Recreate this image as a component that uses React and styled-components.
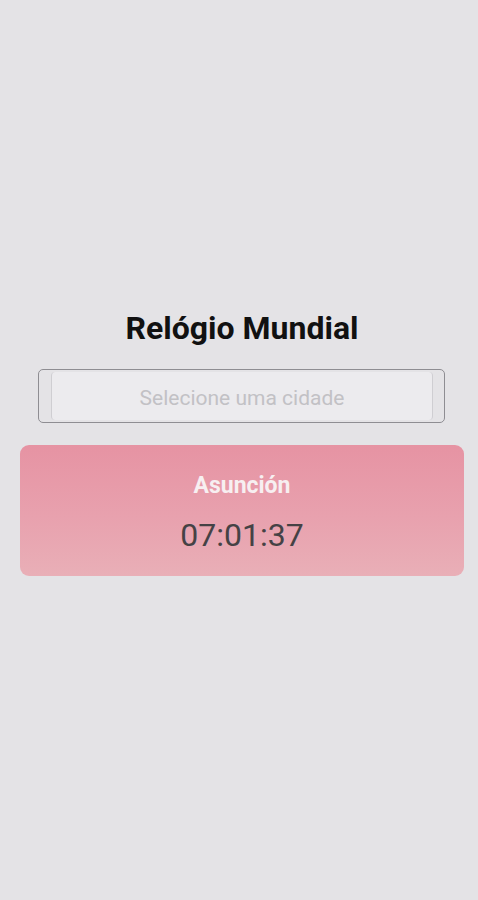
import React from "react";
import styled, { createGlobalStyle } from "styled-components";

const Global = createGlobalStyle`
  html, body { margin: 0; padding: 0; background: #e4e3e6; }
  body { font-family: Roboto, "Liberation Sans", sans-serif; }
`;

const Page = styled.div`
  min-height: 900px;
  box-sizing: border-box;
  padding: 306px 14px 0 20px;
  display: flex;
  flex-direction: column;
  align-items: stretch;
`;

const Title = styled.h1`
  margin: 0;
  text-align: center;
  font-size: 32px;
  line-height: 44px;
  font-weight: 700;
  color: #111;
`;

const PickerFrame = styled.div`
  margin: 19px 19px 0 18px;
  height: 54px;
  box-sizing: border-box;
  border: 1.5px solid #8e8d92;
  border-radius: 5px;
  padding: 2px 11px 2px 12px;
  display: flex;
`;

const PickerInner = styled.div`
  flex: 1;
  border-left: 1.5px solid #cfced2;
  border-right: 1.5px solid #cfced2;
  border-radius: 4px;
  background: #ecebee;
  display: flex;
  align-items: center;
  justify-content: center;
  padding-top: 4px;
  font-size: 21px;
  color: #c2c1c5;
`;

const Card = styled.div`
  margin-top: 22px;
  height: 131px;
  border-radius: 9px;
  background: linear-gradient(180deg, #e693a3 0%, #e8a1ae 55%, #e9afb7 100%);
  display: flex;
  flex-direction: column;
  align-items: center;
  padding-top: 26px;
  box-sizing: border-box;
`;

const City = styled.div`
  font-size: 23px;
  font-weight: 700;
  line-height: 30px;
  color: #f7eff1;
`;

const Time = styled.div`
  margin-top: 15px;
  font-size: 32px;
  line-height: 38px;
  color: #454245;
`;

export default function App() {
  return (
    <>
      <Global />
      <Page>
        <Title>Relógio Mundial</Title>
        <PickerFrame>
          <PickerInner>Selecione uma cidade</PickerInner>
        </PickerFrame>
        <Card>
          <City>Asunción</City>
          <Time>07:01:37</Time>
        </Card>
      </Page>
    </>
  );
}
